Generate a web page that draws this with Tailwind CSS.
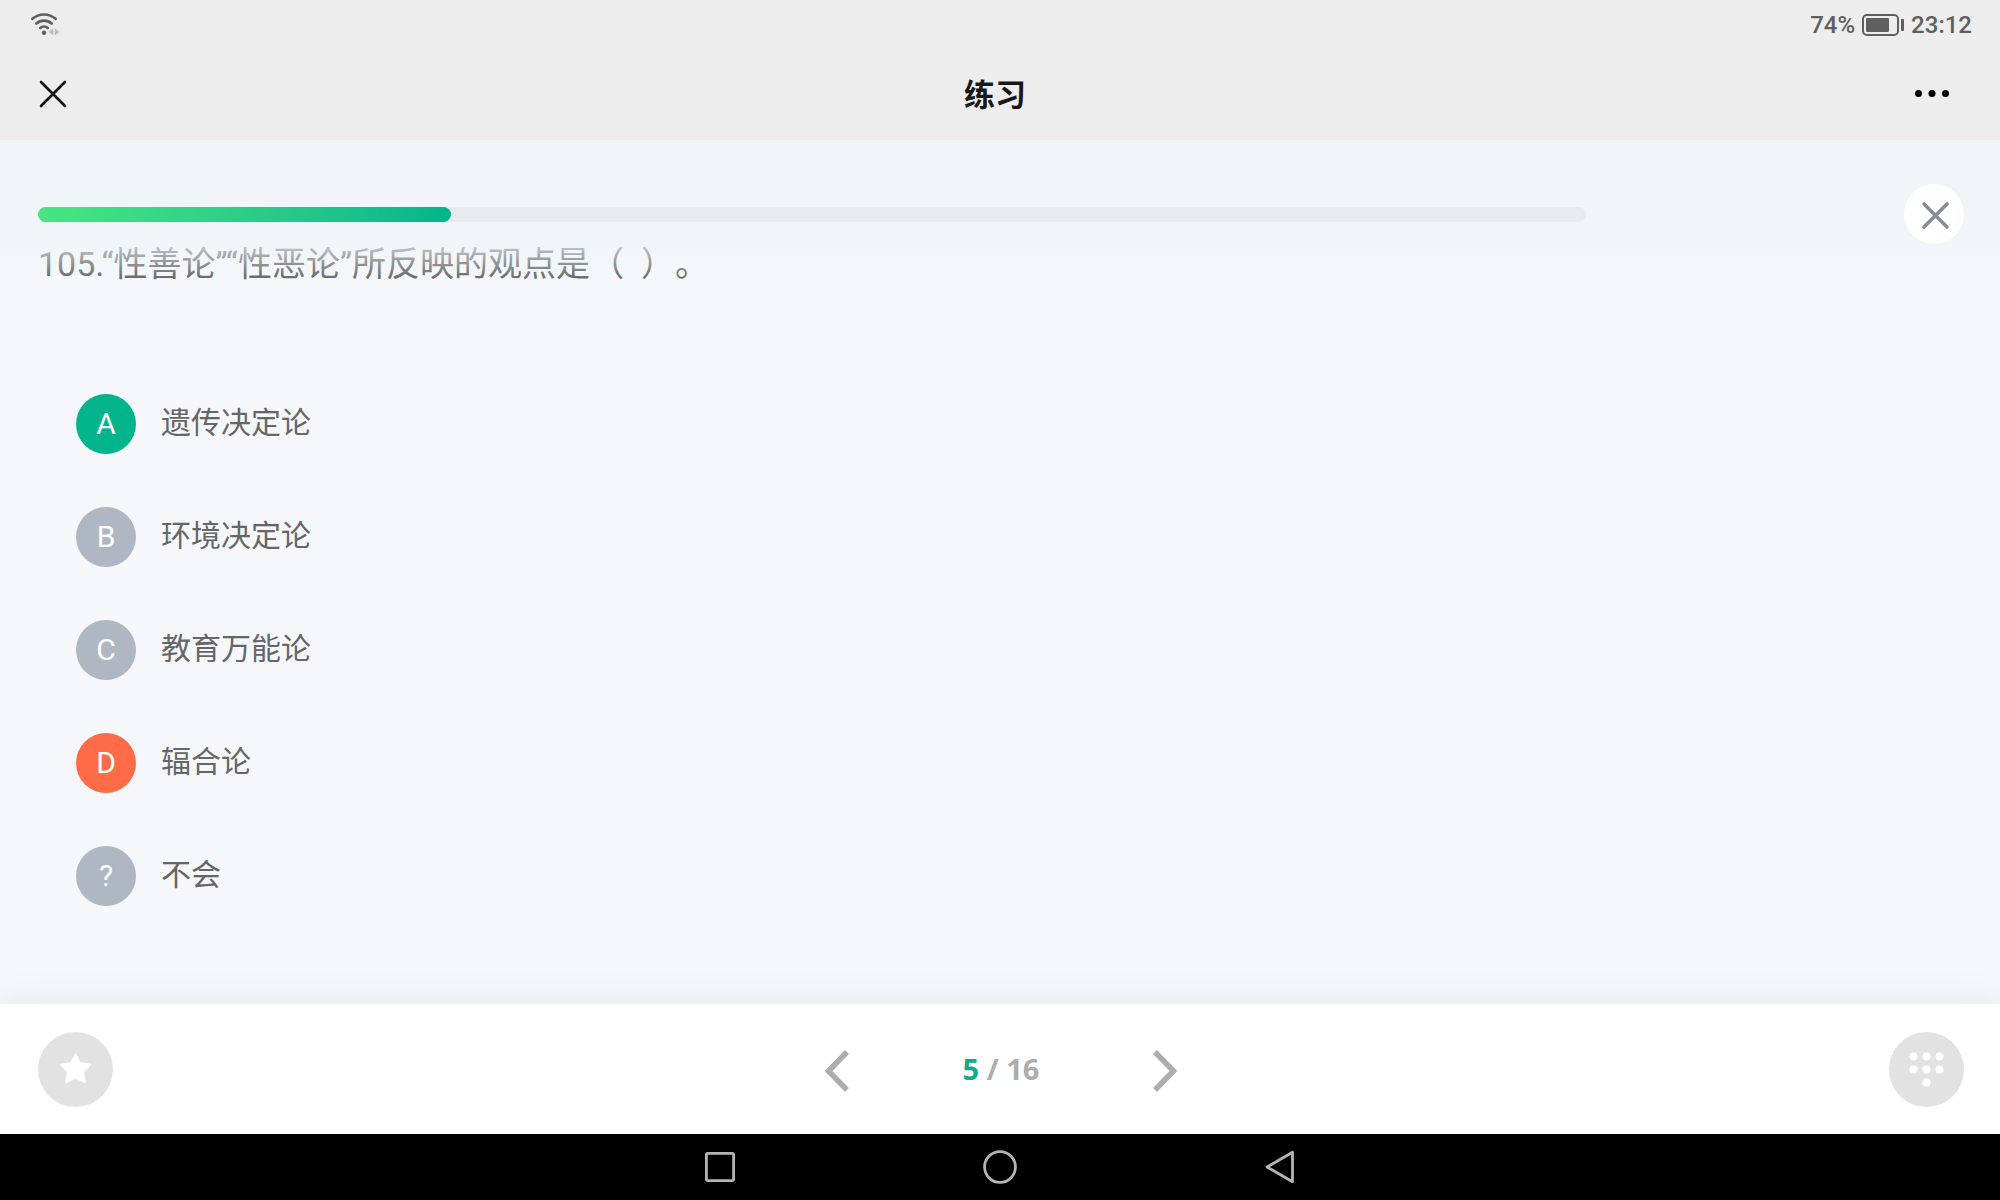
<!DOCTYPE html>
<html lang="zh-CN">

<head>
    <meta charset="UTF-8">
    <meta name="viewport" content="width=device-width, initial-scale=1.0">
    <script src="https://cdn.jsdelivr.net/npm/@tailwindcss/browser@4"></script>
    <title>练习</title>
</head>

<body class="flex flex-col h-screen overflow-hidden bg-[#f5f7fb] font-[Roboto,'Noto_Sans_CJK_SC',sans-serif]">

    <!-- 状态栏 -->
    <div class="flex items-center justify-between h-12 shrink-0 pl-[30px] pr-7 bg-[#ededed] text-[#5f5f5f]">
        <svg class="w-[30px] h-6" viewBox="0 0 30 24" fill="none" stroke="currentColor" stroke-width="2.6" stroke-linecap="round">
            <path d="M2.4 6.8C9 1 19 1 25.6 6.8" />
            <path d="M6.3 11.5C10.5 7.6 17.5 7.6 21.7 11.5" />
            <path d="M10.2 16C12.3 14.1 15.7 14.1 17.8 16" />
            <circle cx="14" cy="20.8" r="2.2" fill="currentColor" stroke="none" />
            <path d="M23 17v6l-4-3zM25 17v6l4-3z" fill="#bbb" stroke="#bbb" stroke-width="0.5" />
        </svg>
        <div class="flex items-center gap-[7px] pt-0.5 text-2xl leading-6 font-medium">
            <span>74%</span>
            <svg class="w-[42px] h-[22px]" viewBox="0 0 42 22" fill="none">
                <rect x="1" y="1" width="35" height="20" rx="4" stroke="currentColor" stroke-width="2" />
                <rect x="4" y="4" width="23" height="14" rx="1" fill="currentColor" />
                <rect x="39" y="5" width="3" height="12" rx="1" fill="currentColor" />
            </svg>
            <span>23:12</span>
        </div>
    </div>

    <!-- 标题栏 -->
    <header class="grid grid-cols-[1fr_auto_1fr] items-center h-[92px] shrink-0 pl-9 pr-[46px] bg-[#ededed]">
        <button class="justify-self-start" aria-label="关闭">
            <svg class="w-8 h-8" viewBox="0 0 32 32" fill="none" stroke="#111" stroke-width="2.6" stroke-linecap="round">
                <path d="M5 4L29 28M29 4L5 28" />
            </svg>
        </button>
        <h1 class="pt-1 text-[31px] leading-10 font-bold text-[#181818]">练习</h1>
        <button class="justify-self-end" aria-label="更多">
            <svg class="w-11 h-8" viewBox="0 0 44 32" fill="#000">
                <circle cx="8.5" cy="15.5" r="3.5" />
                <circle cx="22" cy="15.5" r="3.5" />
                <circle cx="35.5" cy="15.5" r="3.5" />
            </svg>
        </button>
    </header>

    <main class="relative flex-1 min-h-0">
        <!-- 进度条，盖在滚动内容上方 -->
        <div class="absolute inset-x-0 top-0 z-10 flex items-center gap-[318px] h-[148px] pl-[38px] pr-9 bg-linear-to-b from-[#f0f5f8] from-60% to-[#f5f7fb]/0">
            <div class="flex-1 h-[15px] rounded-full bg-[#e7ebee]" role="progressbar" aria-label="进度" aria-valuenow="27">
                <div class="h-full rounded-full bg-linear-to-r from-[#47e681] to-[#02b48b]" style="width: 26.7%"></div>
            </div>
            <button class="flex items-center justify-center w-[60px] h-[60px] rounded-full bg-white" aria-label="退出练习">
                <svg class="w-8 h-8" viewBox="0 0 32 32" fill="none" stroke="#868d93" stroke-width="3.6" stroke-linecap="round">
                    <path d="M6 6L29 29M29 6L6 29" />
                </svg>
            </button>
        </div>

        <!-- 题目 -->
        <div class="h-full overflow-hidden px-[38px] pt-[99px]">
            <h2 class="text-[34px] leading-[50px] text-[#4f4f4f] [text-spacing-trim:space-all]">105.“性善论”“性恶论”所反映的观点是（&nbsp; ）。</h2>

            <div class="flex flex-col gap-[53px] mt-[105px] pl-[38px] text-3xl text-[#666]">
                <button class="flex items-center gap-[25px] text-left">
                    <span class="flex items-center justify-center w-[60px] h-[60px] rounded-full bg-[#02b48b] text-white">A</span>
                    <span class="pb-0.5">遗传决定论</span>
                </button>
                <button class="flex items-center gap-[25px] text-left">
                    <span class="flex items-center justify-center w-[60px] h-[60px] rounded-full bg-[#afb7c3] text-white">B</span>
                    <span class="pb-0.5">环境决定论</span>
                </button>
                <button class="flex items-center gap-[25px] text-left">
                    <span class="flex items-center justify-center w-[60px] h-[60px] rounded-full bg-[#afb7c3] text-white">C</span>
                    <span class="pb-0.5">教育万能论</span>
                </button>
                <button class="flex items-center gap-[25px] text-left">
                    <span class="flex items-center justify-center w-[60px] h-[60px] rounded-full bg-[#ff6c47] text-white">D</span>
                    <span class="pb-0.5">辐合论</span>
                </button>
                <button class="flex items-center gap-[25px] text-left">
                    <span class="flex items-center justify-center w-[60px] h-[60px] rounded-full bg-[#afb7c3] text-white">?</span>
                    <span class="pb-0.5">不会</span>
                </button>
            </div>
        </div>
    </main>

    <!-- 底部操作栏 -->
    <footer class="relative z-20 grid grid-cols-[1fr_auto_1fr] items-center h-[130px] shrink-0 pl-[38px] pr-9 bg-white shadow-[0_0_40px_rgba(0,0,0,0.07)]">
        <button class="flex items-center justify-center justify-self-start w-[75px] h-[75px] rounded-full bg-[#e2e2e2]" aria-label="收藏">
            <svg class="w-9 h-9" viewBox="0 0 36 36" fill="#fff" stroke="#fff" stroke-width="1.5" stroke-linejoin="round">
                <path d="M17.5 3L22.2 12L32.5 13.5L25.3 20.9L27.1 31.5L17.5 26.8L7.9 31.5L9.7 20.9L2.5 13.5L12.8 12Z" />
            </svg>
        </button>
        <div class="flex items-center justify-between w-[354px]">
            <button aria-label="上一题">
                <svg class="w-[26px] h-[46px]" viewBox="0 0 26 46" fill="none" stroke="#adadad" stroke-width="5.5">
                    <path d="M23 6L4.5 25L23 44" />
                </svg>
            </button>
            <p class="font-['Open_Sans',sans-serif] text-[29px] font-bold text-[#adadad]"><span class="text-[#12ac8b]">5</span> / 16</p>
            <button aria-label="下一题">
                <svg class="w-[26px] h-[46px]" viewBox="0 0 26 46" fill="none" stroke="#adadad" stroke-width="5.5">
                    <path d="M3 6L21.5 25L3 44" />
                </svg>
            </button>
        </div>
        <button class="flex items-center justify-center justify-self-end w-[75px] h-[75px] rounded-full bg-[#e2e2e2]" aria-label="答题卡">
            <svg class="w-9 h-9" viewBox="0 0 36 36" fill="#fff">
                <circle cx="4.5" cy="5.5" r="4" />
                <circle cx="17.5" cy="5.5" r="4" />
                <circle cx="30.5" cy="5.5" r="4" />
                <circle cx="4.5" cy="18.5" r="4" />
                <circle cx="17.5" cy="18.5" r="4" />
                <circle cx="30.5" cy="18.5" r="4" />
                <circle cx="17.5" cy="31.5" r="4" />
            </svg>
        </button>
    </footer>

    <!-- 系统导航栏 -->
    <nav class="relative z-20 flex items-center justify-center gap-[246px] h-[66px] shrink-0 bg-black">
        <button aria-label="最近任务">
            <svg class="w-[34px] h-[34px]" viewBox="0 0 34 34" fill="none" stroke="#b4b4b4" stroke-width="2.8">
                <rect x="3.4" y="3.4" width="27.2" height="27.2" rx="1.5" />
            </svg>
        </button>
        <button aria-label="主页">
            <svg class="w-[34px] h-[34px]" viewBox="0 0 34 34" fill="none" stroke="#b4b4b4" stroke-width="2.8">
                <circle cx="17" cy="17" r="15.4" />
            </svg>
        </button>
        <button aria-label="返回">
            <svg class="w-[34px] h-[34px]" viewBox="0 0 34 34" fill="none" stroke="#b4b4b4" stroke-width="2.8" stroke-linejoin="round">
                <path d="M29.5 2.2V31.8L4 17Z" />
            </svg>
        </button>
    </nav>

</body>

</html>
